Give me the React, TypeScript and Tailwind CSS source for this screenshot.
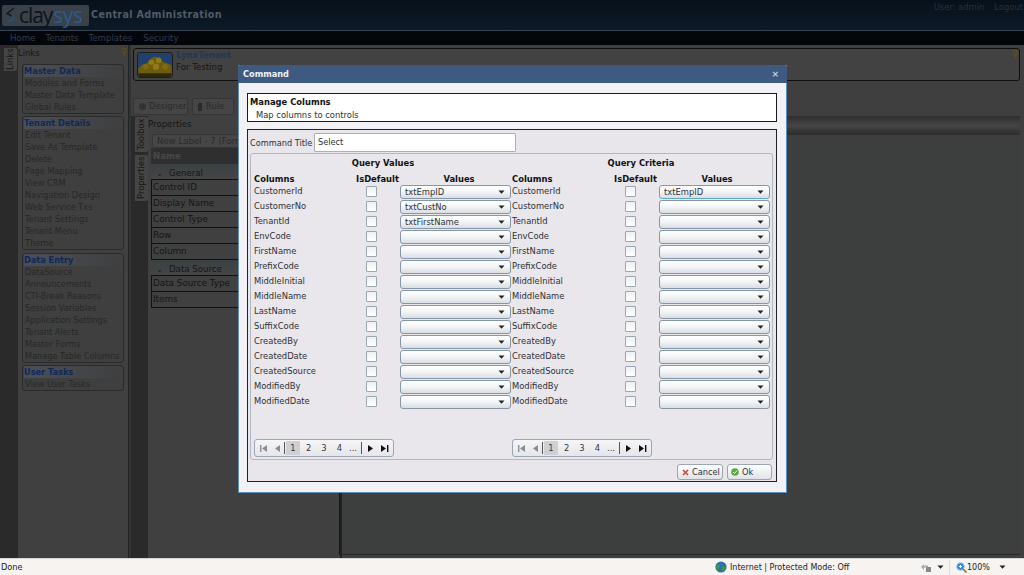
import React from "react";

const FONT = { fontFamily: '"DejaVu Sans", Verdana, sans-serif' };

const columns = [
  "CustomerId","CustomerNo","TenantId","EnvCode","FirstName","PrefixCode","MiddleInitial","MiddleName",
  "LastName","SuffixCode","CreatedBy","CreatedDate","CreatedSource","ModifiedBy","ModifiedDate",
];

function Arrow() {
  return (
    <svg width="7" height="4" viewBox="0 0 7 4" className="shrink-0">
      <path d="M0.5 0.5h6L3.5 3.8z" fill="#222" />
    </svg>
  );
}

function Select({ value, focused }: { value?: string; focused?: boolean }) {
  return (
    <div
      className={
        "flex h-[14px] w-[111px] items-center justify-between rounded-[3px] border bg-gradient-to-b from-white via-[#f2f4f6] to-[#d9dee3] pl-[4px] pr-[5px] text-[8.4px] leading-none text-[#2c3036] " +
        (focused ? "border-[#5fa8c4]" : "border-[#8796a6]")
      }
    >
      <span className="pt-[1px]">{value}</span>
      <Arrow />
    </div>
  );
}

function Check() {
  return <div className="h-[11px] w-[11px] rounded-[1px] border border-[#9aa6b2] bg-gradient-to-b from-[#eef0f2] to-white" />;
}

function PagerIcon({ kind, on }: { kind: "first" | "prev" | "next" | "last"; on?: boolean }) {
  const c = on ? "#111" : "#8a8d92";
  const d = {
    first: "M1 1h1.4v7H1zM8 1v7L3 4.5z",
    prev: "M7 1v7L2 4.5z",
    next: "M2 1v7l5-3.5z",
    last: "M7 1h1.4v7H7zM1 1v7l5-3.5z",
  }[kind];
  return (
    <svg width="9" height="9" viewBox="0 0 9 9">
      <path d={d} fill={c} />
    </svg>
  );
}

function Pager() {
  return (
    <div className="flex h-[18px] w-[140px] items-center rounded-[3px] border border-[#9aa6b4] bg-gradient-to-b from-[#f6f6f8] to-[#e6e6ea] pl-[4px] text-[8.4px] text-[#33373c]">
      <PagerIcon kind="first" />
      <div className="ml-[5px]"><PagerIcon kind="prev" /></div>
      <div className="ml-[2px] h-[12px] w-px bg-[#555]" />
      <div className="ml-[1px] flex h-[14px] w-[14px] items-center justify-center rounded-[1px] bg-[#cfd0d2]">1</div>
      <span className="ml-[6px]">2</span>
      <span className="ml-[10px]">3</span>
      <span className="ml-[10px]">4</span>
      <span className="ml-[7px]">...</span>
      <div className="ml-[4px] h-[12px] w-px bg-[#555]" />
      <div className="ml-[4px]"><PagerIcon kind="next" on /></div>
      <div className="ml-[5px]"><PagerIcon kind="last" on /></div>
    </div>
  );
}

function QuerySection({
  title, values, focused, chk, sel,
}: { title: string; values: string[]; focused?: boolean; chk: string; sel: string }) {
  return (
    <div className="flex w-[258px] flex-col">
      <div className="h-[15px] text-center text-[8.4px] font-bold leading-[10px] text-[#111]">{title}</div>
      <div className="flex h-[11px] items-center pt-[2px] text-[8.4px] font-bold leading-none text-[#111]">
        <span className="w-[101px]">Columns</span>
        <span className="w-[45px] text-center">IsDefault</span>
        <span className="w-[112px] pl-[6px] text-center">Values</span>
      </div>
      <div className="flex flex-col">
        {columns.map((c, i) => (
          <div key={c} className="flex h-[15px] items-center text-[8.4px] leading-none text-[#2c3036]">
            <span className={sel}>{c}</span>
            <div className={chk}><Check /></div>
            <Select value={values[i]} focused={focused && i === 0} />
          </div>
        ))}
      </div>
      <div className="mt-[30px]"><Pager /></div>
    </div>
  );
}

function NavGroup({ title, items }: { title: string; items: string[] }) {
  return (
    <div className="rounded-[3px] border border-[#2b2b2b] bg-[#3f3f3f] pl-[1px]">
      <div className="flex h-[12px] items-center rounded-t-[2px] bg-gradient-to-r from-[#4a4f58] to-[#3f3f3f] text-[8.2px] font-bold leading-none text-[#10285a]">
        {title}
      </div>
      {items.map((t) => (
        <div key={t} className="flex h-[12px] items-center whitespace-nowrap pl-[1px] text-[8.2px] leading-none text-[#272727]">
          {t}
        </div>
      ))}
    </div>
  );
}

function VTab({ label, h }: { label: string; h: number }) {
  return (
    <div
      className="flex w-[13px] items-center justify-center rounded-l-[2px] bg-[#454545] text-[8.4px] leading-none text-[#151515]"
      style={{ height: h, writingMode: "vertical-rl", transform: "rotate(180deg)" }}
    >
      {label}
    </div>
  );
}

function PropRow({ label }: { label: string }) {
  return (
    <div className="flex h-[16px] items-center border-b border-[#111] pl-[1px] text-[8.8px] leading-none text-[#151515]">
      {label}
    </div>
  );
}

function Pin() {
  return (
    <svg width="5" height="8" viewBox="0 0 5 8">
      <path d="M1 0.5h3v4H1zM2.5 4.5V8" stroke="#5a5020" fill="none" />
    </svg>
  );
}

export default function App() {
  return (
    <div className="relative flex h-[575px] w-[1024px] flex-col overflow-hidden bg-[#3f3f3f]" style={FONT}>
      {/* header */}
      <div className="flex h-[30px] items-center justify-between bg-gradient-to-b from-[#07101a] to-[#0c1a28] pl-[2px] pr-[1px]">
        <div className="flex items-center">
          <div className="flex h-[21px] w-[87px] items-center rounded-[2px] bg-[#3b4148] pl-[2px]">
            <svg width="13" height="18" viewBox="0 0 13 18" className="shrink-0">
              <path d="M10 2 L3 7.5 L8 10" stroke="#14181d" strokeWidth="1.5" fill="none" />
              <path d="M3 15.5 C8 15.5 12 12.5 8 9" stroke="#1f5590" strokeWidth="1.5" fill="none" />
            </svg>
            <span className="ml-[2px] whitespace-nowrap text-[21px] font-medium leading-[21px]" style={{ fontFamily: '"Open Sans", sans-serif' }}>
              <span className="tracking-[-1.1px] text-[#0e1216]">clay</span>
              <span className="ml-[1px] tracking-[-0.3px] text-[#2a5a92]">sys</span>
            </span>
          </div>
          <span className="ml-[2px] pt-[1px] text-[9.6px] font-bold tracking-[0.35px] text-[#515b65]">Central Administration</span>
        </div>
        <div className="flex gap-[10px] self-start pt-[1px] text-[8.4px] text-[#2c3036]">
          <span>User: admin</span>
          <span>Logout</span>
        </div>
      </div>
      <div className="h-px bg-[#39414c]" />
      <div className="flex h-[14px] items-center gap-[10px] bg-[#03060b] pl-[10px] text-[8.6px] text-[#343c46]">
        <span>Home</span>
        <span>Tenants</span>
        <span>Templates</span>
        <span className="ml-[1px]">Security</span>
      </div>

      {/* main */}
      <div className="flex h-[513px]">
        <div className="flex w-[18px] flex-col items-end bg-[#2a2a2a] pt-[3px]">
          <div className="mr-[1px]"><VTab label="Links" h={23} /></div>
        </div>
        <div className="flex w-[111px] flex-col border-r border-[#202628] bg-[#404040] pb-[2px]">
          <div className="flex h-[14px] items-center justify-between pr-[1px] text-[8.4px] text-[#151515]">
            <span className="pt-[2px]">Links</span>
            <Pin />
          </div>
          <div className="mx-[4px] mt-[5px] flex flex-col gap-[2px]">
            <NavGroup title="Master Data" items={["Modules and Forms", "Master Data Template", "Global Rules"]} />
            <NavGroup
              title="Tenant Details"
              items={["Edit Tenant","Save As Template","Delete","Page Mapping","View CRM","Navigation Design","Web Service Txs","Tenant Settings","Tenant Menu","Theme"]}
            />
            <div className="mt-[1px]">
              <NavGroup
                title="Data Entry"
                items={["DataSource","Announcements","CTI-Break Reasons","Session Variables","Application Settings","Tenant Alerts","Master Forms","Manage Table Columns"]}
              />
            </div>
            <NavGroup title="User Tasks" items={["View User Tasks"]} />
          </div>
        </div>
        <div className="w-[2px] bg-[#333]" />

        <div className="flex flex-1 flex-col">
          {/* tenant banner */}
          <div className="ml-[2px] mr-[4px] mt-[3px] flex h-[33px] items-center rounded-[3px] border border-[#0f0f0f] bg-[#424242] pl-[3px] pr-[1px]">
            <svg width="36" height="26" viewBox="0 0 36 26" className="shrink-0 rounded-[3px] border border-[#1c1c1c]">
              <rect width="36" height="26" fill="#20406f" />
              <path d="M0 26V17C4 10 9 13 12 8c3-5 9-5 12-1 3 4 8 3 12 7v12z" fill="#6d5c10" />
              <circle cx="14" cy="10" r="3" fill="#8f7a14" />
              <circle cx="22" cy="8" r="3" fill="#8f7a14" />
              <circle cx="8" cy="15" r="3" fill="#7f6c12" />
              <circle cx="19" cy="15" r="3.5" fill="#8f7a14" />
              <circle cx="29" cy="15" r="3" fill="#7f6c12" />
              <rect y="22" width="36" height="4" fill="#2d2a0a" />
            </svg>
            <div className="ml-[3px] flex flex-1 flex-col gap-[3px] self-start pt-[2px] text-[8.6px] leading-[9px]">
              <span className="font-bold text-[#1e3660]">LynxTenant</span>
              <span className="text-[#151515]">For Testing</span>
            </div>
            <div className="self-start pt-[1px]"><Pin /></div>
          </div>
          {/* toolbar */}
          <div className="ml-[2px] mt-[17px] flex h-[17px] gap-[4px] text-[8.4px] text-[#2a2a2a]">
            <div className="flex w-[55px] items-center gap-[3px] rounded-[2px] border border-[#363636] bg-[#454545] pl-[5px]">
              <div className="h-[7px] w-[7px] rounded-full bg-[#333]" />
              <span>Designer</span>
            </div>
            <div className="flex w-[42px] items-center gap-[4px] rounded-[2px] border border-[#363636] bg-[#454545] pl-[5px]">
              <div className="h-[8px] w-[4px] bg-[#2a2a2a]" />
              <span>Rule</span>
            </div>
          </div>

          <div className="mt-[1px] flex flex-1">
            <div className="flex w-[17px] flex-col items-end gap-[3px] bg-[#2a2a2a] pt-[1px]">
              <VTab label="Toolbox" h={35} />
              <VTab label="Properties" h={46} />
            </div>
            <div className="mb-[3px] flex w-[192px] flex-col border-r border-[#151515] bg-[#404040]">
              <div className="flex h-[16px] items-center text-[8.6px] text-[#151515]">Properties</div>
              <div className="mx-[4px] mt-[2px] flex h-[14px] items-center rounded-[2px] border border-[#363636] bg-[#464646] pl-[4px] text-[8.6px] text-[#2a2a2a]">
                New Label - 7 (Form)
              </div>
              <div className="ml-[3px] flex h-[16px] items-center bg-[#2f2f2f] pl-[2px] text-[8.6px] font-bold text-[#484848]">Name</div>
              <div className="ml-[3px] flex h-[15px] items-center bg-gradient-to-b from-[#3a4142] to-[#454545] pl-[5px] pt-[3px] text-[8.6px] text-[#151515]">
                <span className="w-[13px]">⌄</span>General
              </div>
              <div className="ml-[3px] border border-b-0 border-[#111]">
                <PropRow label="Control ID" />
                <PropRow label="Display Name" />
                <PropRow label="Control Type" />
                <PropRow label="Row" />
                <PropRow label="Column" />
              </div>
              <div className="ml-[3px] flex h-[15px] items-center bg-gradient-to-b from-[#3a4142] to-[#454545] pl-[5px] pt-[3px] text-[8.6px] text-[#151515]">
                <span className="w-[13px]">⌄</span>Data Source
              </div>
              <div className="ml-[3px] border border-b-0 border-[#111]">
                <PropRow label="Data Source Type" />
                <PropRow label="Items" />
              </div>
            </div>
            <div className="w-[2px] bg-[#222]" />
            <div className="flex flex-1 flex-col pr-[4px]">
              <div className="h-[19px] bg-gradient-to-b from-[#2f2f2f] via-[#454545] to-[#2c2c2c]" />
              <div className="mb-[3px] flex-1 border-b border-[#262626] bg-[#3d3f3e]" />
            </div>
          </div>
        </div>
      </div>

      {/* status bar */}
      <div className="flex h-[17px] items-center border-t border-[#d8d8d8] bg-[#f6f3f1] pl-[1px] text-[8.2px] text-[#222]">
        <span className="w-[714px] pt-[1px]">Done</span>
        <svg width="12" height="12" viewBox="0 0 12 12" className="shrink-0">
          <circle cx="6" cy="6" r="5.6" fill="#2f6fb0" />
          <path d="M2 3.5c2-1 3 0 3 1.5S3 7 3.5 9 1 7 1 5.5zM7 6c2-1 3.5 0 3.5 1S8 10.5 7.5 10 6.5 7 7 6z" fill="#3f9a3c" />
        </svg>
        <span className="ml-[3px] w-[190px] whitespace-nowrap pt-[1px] text-[8px]">Internet | Protected Mode: Off</span>
        <svg width="12" height="12" viewBox="0 0 12 12" className="shrink-0">
          <path d="M1 6l3-3v2c2-1 3-1 4 0v2C6 6 5 6 4 7v2z" fill="#a9adb1" />
          <rect x="6" y="6" width="5" height="5" fill="#85898e" />
        </svg>
        <div className="ml-[5px]"><Arrow /></div>
        <div className="ml-[5px] h-[15px] w-px bg-[#dedbd8]" />
        <svg width="11" height="11" viewBox="0 0 11 11" className="ml-[6px] shrink-0">
          <circle cx="4.5" cy="4.5" r="3.8" fill="#3d86d0" stroke="#9cc4ea" />
          <path d="M3 4.5h3M4.5 3v3" stroke="#fff" />
          <path d="M7 7l3.5 3.5" stroke="#a86a20" strokeWidth="1.6" />
        </svg>
        <span className="w-[32px] whitespace-nowrap pt-[1px] text-[8px]">100%</span>
        <Arrow />
      </div>

      {/* dialog */}
      <div className="absolute left-[238px] top-[65px] flex h-[428px] w-[549px] flex-col border border-t-0 border-[#5c8fbd] bg-[#f1f1f6]">
        <div className="-mx-px flex h-[18px] shrink-0 items-center justify-between rounded-t-[2px] bg-[#3f5a80] pl-[5px] pr-[8px] pt-[1px] text-[8.2px] font-bold text-[#eef2f6]">
          <span>Command</span>
          <span className="text-[9px] leading-none text-[#c6cfda]">×</span>
        </div>
        <div className="ml-[8px] mr-[9px] mt-[10px] flex h-[29px] shrink-0 flex-col justify-center gap-[4px] border border-[#1a1a1a] bg-white pl-[2px] pt-[2px] text-[8.4px] leading-[9px]">
          <span className="font-bold text-[#111]">Manage Columns</span>
          <span className="pl-[6px] text-[#2c3036]">Map columns to controls</span>
        </div>
        <div className="ml-[8px] mr-[9px] mt-[7px] flex flex-1 flex-col border border-[#222] bg-[#e8e6ea] pl-[2px] pr-[3px] pt-[3px]">
          <div className="flex h-[19px] shrink-0 items-center text-[8.2px] text-[#2c3036]">
            <span className="w-[64px] shrink-0 pt-[1px]">Command Title</span>
            <div className="flex h-[19px] w-[202px] items-center rounded-[1px] border border-[#a8b0ba] bg-white pl-[3px]">Select</div>
          </div>
          <div className="mt-[1px] flex h-[307px] shrink-0 rounded-[3px] border border-[#b0b8c2] bg-[#e9e7eb] pl-[3px] pt-[4px]">
            <QuerySection
              title="Query Values"
              values={["txtEmpID", "txtCustNo", "txtFirstName"]}
              sel="w-[112px] shrink-0"
              chk="w-[34px] shrink-0"
            />
            <QuerySection
              title="Query Criteria"
              values={["txtEmpID"]}
              focused
              sel="w-[113px] shrink-0"
              chk="w-[34px] shrink-0"
            />
          </div>
          <div className="mr-[1px] mt-[4px] flex justify-end gap-[4px] text-[8.2px] text-[#2c3036]">
            <div className="flex h-[16px] w-[46px] items-center gap-[3px] rounded-[3px] border border-[#9aa6b4] bg-gradient-to-b from-white to-[#dfe3e8] pl-[4px]">
              <svg width="7" height="7" viewBox="0 0 7 7"><path d="M1 1l5 5M6 1L1 6" stroke="#d8402c" strokeWidth="1.5" /></svg>
              <span>Cancel</span>
            </div>
            <div className="flex h-[16px] w-[45px] items-center gap-[3px] rounded-[3px] border border-[#9aa6b4] bg-gradient-to-b from-white to-[#dfe3e8] pl-[3px]">
              <svg width="8" height="8" viewBox="0 0 8 8"><circle cx="4" cy="4" r="3.8" fill="#5aa83e" /><path d="M2 4l1.5 1.5L6 2.5" stroke="#fff" fill="none" /></svg>
              <span>Ok</span>
            </div>
          </div>
        </div>
        <div className="h-[10px] shrink-0" />
      </div>
    </div>
  );
}
